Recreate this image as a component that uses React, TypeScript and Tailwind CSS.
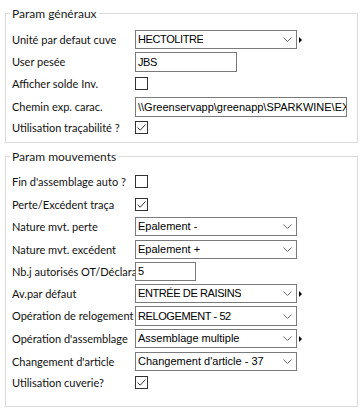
import type { ReactNode } from "react";

type Field =
  | { kind: "combo"; value: string; w?: number; marker?: boolean }
  | { kind: "input"; value: string; w: number }
  | { kind: "check"; checked: boolean };

interface Row {
  label: string;
  mt: string;
  h: string;
  field: Field;
}

const labelFont = { fontFamily: "Lato, 'Noto Sans', sans-serif" };
const fieldFont = { fontFamily: "'Liberation Sans', Arial, sans-serif" };

const generalRows: Row[] = [
  { label: "Unité par defaut cuve", mt: "mt-[16px]", h: "h-[19px]", field: { kind: "combo", value: "HECTOLITRE", marker: true } },
  { label: "User pesée", mt: "mt-[3px]", h: "h-[20px]", field: { kind: "input", value: "JBS", w: 102 } },
  { label: "Afficher solde Inv.", mt: "mt-[5px]", h: "h-[13px]", field: { kind: "check", checked: false } },
  { label: "Chemin exp. carac.", mt: "mt-[7px]", h: "h-[20px]", field: { kind: "input", value: "\\\\Greenservapp\\greenapp\\SPARKWINE\\EXPORT", w: 212 } },
  { label: "Utilisation traçabilité ?", mt: "mt-[4px]", h: "h-[13px]", field: { kind: "check", checked: true } }
];

const movementRows: Row[] = [
  { label: "Fin d'assemblage auto ?", mt: "mt-[18px]", h: "h-[13px]", field: { kind: "check", checked: false } },
  { label: "Perte/Excédent traça", mt: "mt-[10px]", h: "h-[13px]", field: { kind: "check", checked: true } },
  { label: "Nature mvt. perte", mt: "mt-[6px]", h: "h-[19px]", field: { kind: "combo", value: "Epalement -" } },
  { label: "Nature mvt. excédent", mt: "mt-[4px]", h: "h-[19px]", field: { kind: "combo", value: "Epalement +" } },
  { label: "Nb.j autorisés OT/Déclaration", mt: "mt-[3px]", h: "h-[19px]", field: { kind: "input", value: "5", w: 61 } },
  { label: "Av.par défaut", mt: "mt-[3px]", h: "h-[19px]", field: { kind: "combo", value: "ENTRÉE DE RAISINS", marker: true } },
  { label: "Opération de relogement", mt: "mt-[3px]", h: "h-[20px]", field: { kind: "combo", value: "RELOGEMENT - 52" } },
  { label: "Opération d'assemblage", mt: "mt-[3px]", h: "h-[19px]", field: { kind: "combo", value: "Assemblage multiple", marker: true } },
  { label: "Changement d'article", mt: "mt-[4px]", h: "h-[19px]", field: { kind: "combo", value: "Changement d'article - 37" } },
  { label: "Utilisation cuverie?", mt: "mt-[5px]", h: "h-[13px]", field: { kind: "check", checked: true } }
];

// upper-case values render narrower in the original font
const isCaps = (value: string) => value === value.toUpperCase();

function Chevron() {
  return (
    <svg width="9" height="5" viewBox="0 0 9 5" className="shrink-0" aria-hidden="true">
      <path d="M0.5 0.5 L4.5 4.5 L8.5 0.5" fill="none" stroke="#6b6b6b" strokeWidth="1" />
    </svg>
  );
}

function CheckBox({ checked }: { checked: boolean }) {
  return (
    <span className="grid h-[13px] w-[13px] shrink-0 place-items-center border border-[#333333] bg-white">
      {checked ? (
        <svg width="11" height="11" viewBox="0 0 11 11" aria-hidden="true">
          <path d="M1.5 5.5 L4.2 8.2 L9.5 2.5" fill="none" stroke="#333333" strokeWidth="1" />
        </svg>
      ) : null}
    </span>
  );
}

function FieldControl({ field }: { field: Field }) {
  if (field.kind === "check") return <CheckBox checked={field.checked} />;
  if (field.kind === "input") {
    return (
      <div
        style={{ ...fieldFont, width: field.w }}
        className={`flex h-full items-center overflow-hidden whitespace-nowrap border border-[#7a7a7a] bg-white pl-[2px] text-[11px] text-black ${isCaps(field.value) ? "tracking-[-0.4px]" : ""}`}
      >
        {field.value}
      </div>
    );
  }
  return (
    <div className="flex h-full items-center">
      <div
        style={fieldFont}
        className="flex h-full w-[162px] items-center justify-between border border-[#7a7a7a] bg-white pl-[2px] pr-[4px] text-[11px] text-black"
      >
        <span className={`overflow-hidden whitespace-nowrap ${isCaps(field.value) ? "tracking-[-0.4px]" : ""}`}>{field.value}</span>
        <Chevron />
      </div>
      {field.marker ? (
        <span className="ml-[2px] h-0 w-0 border-y-[3px] border-l-[3px] border-y-transparent border-l-black" />
      ) : null}
    </div>
  );
}

function GroupBox({ title, className, children }: { title: string; className?: string; children: ReactNode }) {
  return (
    <div className={`relative ml-[5px] w-[353px] border border-[#dcdcdc] pl-[6px] ${className ?? ""}`}>
      <span style={labelFont} className="absolute -top-[8px] left-[4px] bg-white px-[2px] text-[12px] leading-[15px] text-[#1a1a1a]">
        {title}
      </span>
      {children}
    </div>
  );
}

function Rows({ rows }: { rows: Row[] }) {
  return (
    <>
      {rows.map((row) => (
        <div key={row.label} className={`flex items-center ${row.mt} ${row.h}`}>
          <span style={labelFont} className="w-[123px] shrink-0 overflow-hidden whitespace-nowrap pb-[1px] text-[11px] leading-[15px] text-[#111111]">
            {row.label}
          </span>
          <FieldControl field={row.field} />
        </div>
      ))}
    </>
  );
}

export default function App() {
  return (
    <div className="h-[409px] w-[360px] overflow-hidden bg-white pt-[13px]">
      <GroupBox title="Param généraux" className="pb-[8px]">
        <Rows rows={generalRows} />
      </GroupBox>
      <GroupBox title="Param mouvements" className="mt-[13px] pb-[17px]">
        <Rows rows={movementRows} />
      </GroupBox>
    </div>
  );
}
